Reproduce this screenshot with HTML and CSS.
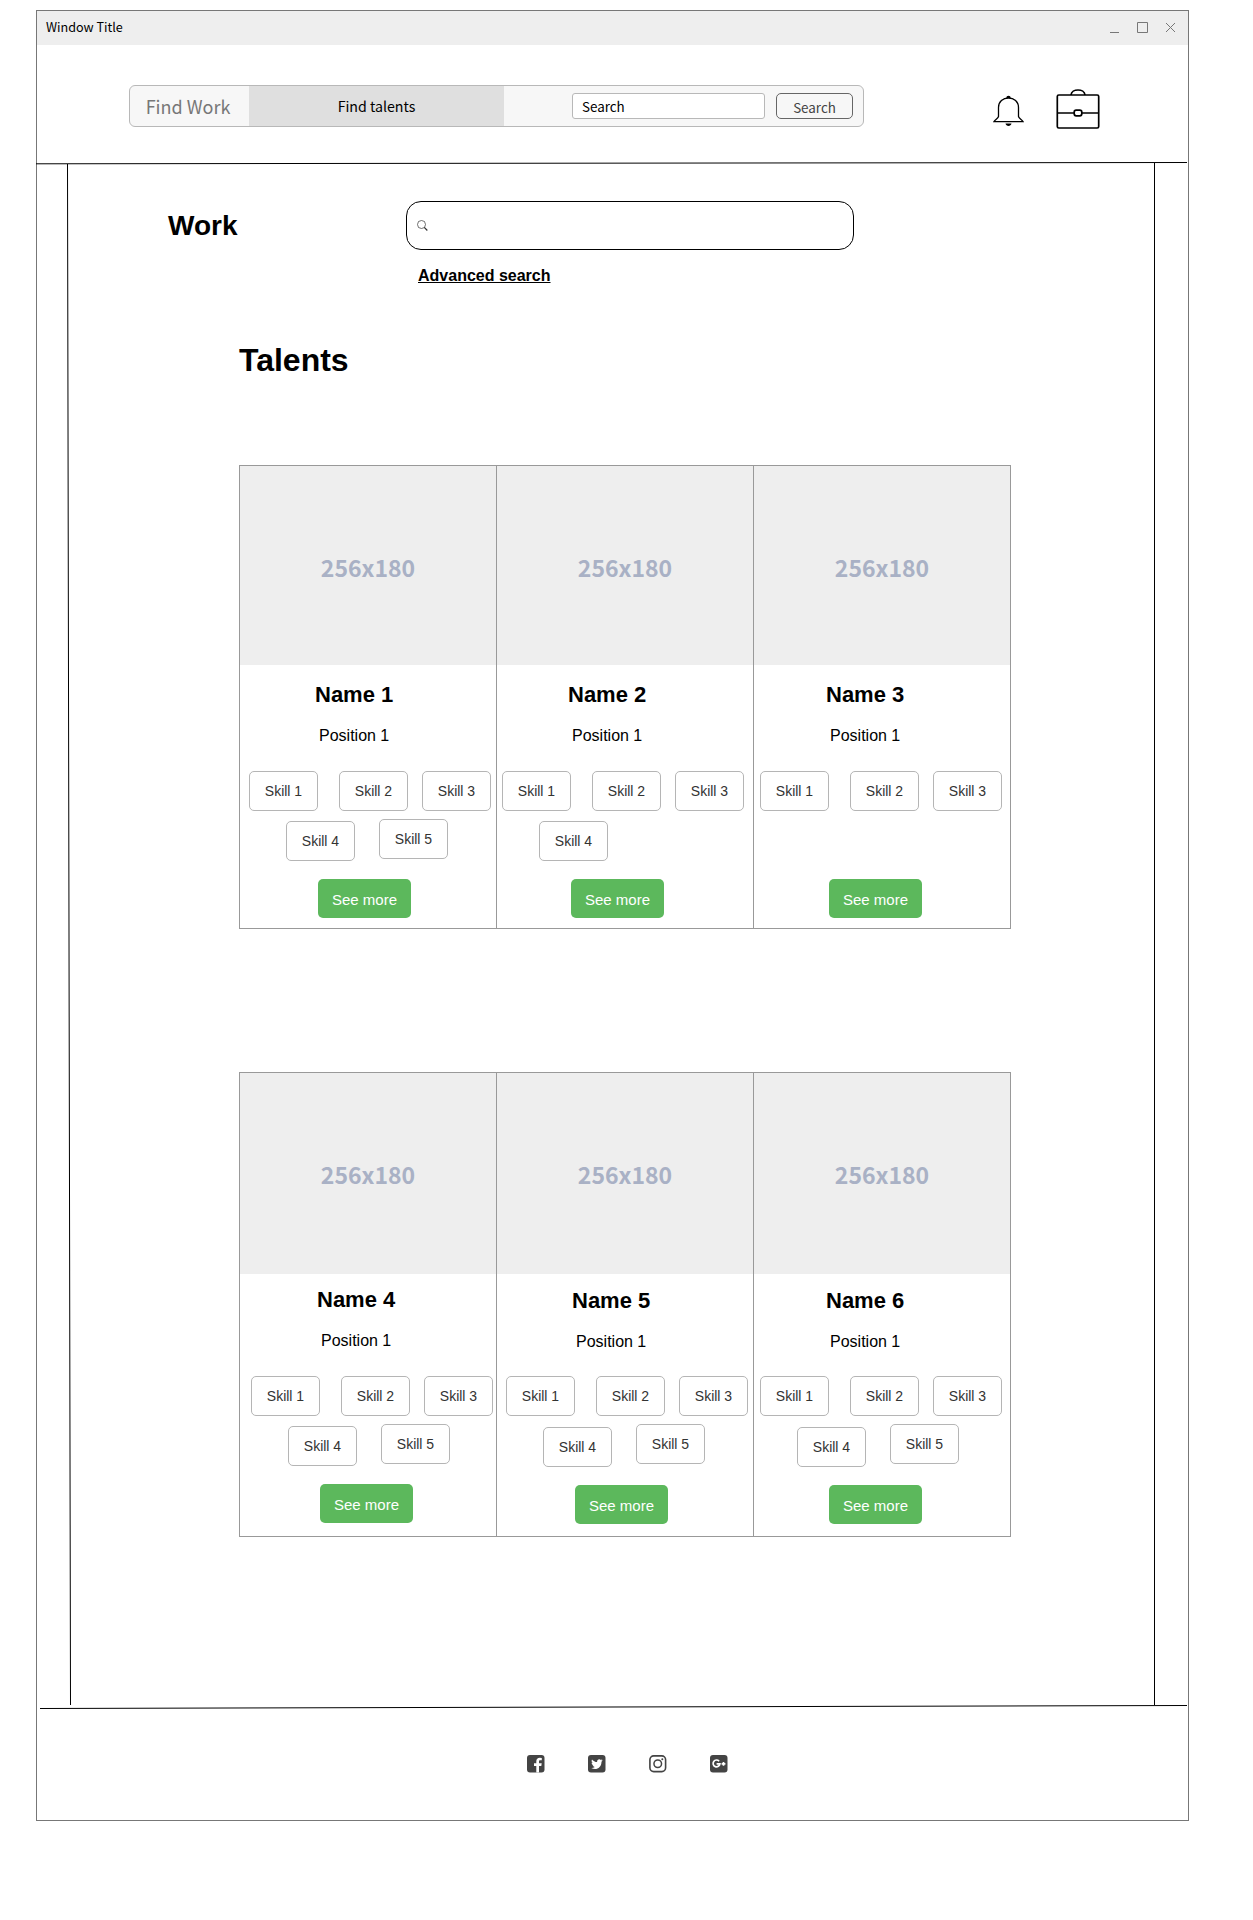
FILE: index.html
```html
<!DOCTYPE html>
<html lang="en">
<head>
<meta charset="utf-8">
<title>Talents</title>
<link rel="stylesheet" href="styles.css">
</head>
<body>
<div class="window">
  <div class="titlebar">
    <span class="titlebar-text">Window Title</span>
    <svg class="titlebar-controls" width="66" height="14" viewBox="0 0 66 14" fill="none" stroke="#777">
      <path d="M0 11.500H9M27.500 1.500H37.500V11.500H27.500Z"/><path d="M56 2L65 11M65 2L56 11"/>
    </svg>
  </div>

  <header class="header">
    <nav class="nav">
      <a class="nav-item nav-work">Find Work</a>
      <a class="nav-item nav-talents">Find talents</a>
      <div class="nav-search">
        <div class="nav-input">Search</div>
        <div class="nav-button">Search</div>
      </div>
    </nav>
    <svg class="bell" width="32" height="36" viewBox="0 0 32 36" fill="none" stroke="#000" stroke-width="1.300">
      <path d="M6.500 22.500V13.500C6.500 7.500 11 4 16.500 4S26.500 7.500 26.500 13.500V22.500C27 24.500 29.500 25 31 27.600H2C3.500 25 6 24.500 6.500 22.500Z"/>
      <path d="M14.300 3.900A2.200 2.200 0 0 1 18.700 3.900ZM13.500 29.500H19.500C19 32.800 14 32.800 13.500 29.500Z" fill="#000" stroke="none"/>
    </svg>
    <svg class="briefcase" width="44" height="40" viewBox="0 0 44 40" fill="none" stroke="#000" stroke-width="1.700">
      <rect x="1.300" y="6" width="41.400" height="33" rx="1.500"/>
      <path d="M15 6C15.500 -.700 28.500 -.700 29 6M1 24H18M26 24H43"/>
      <rect x="18.200" y="21.200" width="7.600" height="5.600" rx="2"/>
    </svg>
  </header>
  <svg class="rule" width="1151" height="3" viewBox="0 0 1151 3"><path d="M-1 1.800L1150 .500" stroke="#000"/></svg>

  <div class="body">
    <svg class="rail" width="40" height="1540" viewBox="0 0 40 1540"><path d="M30.500 -1L33.500 1540" stroke="#000"/></svg>
    <main class="main">
      <div class="top">
        <h1 class="work">Work</h1>
        <div class="search-area">
          <div class="search-box">
            <svg width="12" height="12" viewBox="0 0 12 12" fill="none" stroke="#333"><circle cx="4.500" cy="4.500" r="4" stroke-width=".700"/><path d="M7.300 7.300L10.300 10.500" stroke-width="1.200"/></svg>
          </div>
          <a class="advanced">Advanced search</a>
        </div>
      </div>
      <h2 class="talents">Talents</h2>

      <div class="cards cards-upper">
        <article class="card">
          <div class="photo">256x180</div>
          <div class="info info-1">
            <h3 class="name">Name 1</h3><p class="position">Position 1</p>
            <div class="skills"><span class="skill">Skill 1</span><span class="skill">Skill 2</span><span class="skill">Skill 3</span></div>
            <div class="skills-more"><span class="skill">Skill 4</span><span class="skill">Skill 5</span></div>
            <a class="more">See more</a>
          </div>
        </article>
        <article class="card">
          <div class="photo">256x180</div>
          <div class="info info-2">
            <h3 class="name">Name 2</h3><p class="position">Position 1</p>
            <div class="skills"><span class="skill">Skill 1</span><span class="skill">Skill 2</span><span class="skill">Skill 3</span></div>
            <div class="skills-more"><span class="skill">Skill 4</span></div>
            <a class="more">See more</a>
          </div>
        </article>
        <article class="card">
          <div class="photo">256x180</div>
          <div class="info info-3">
            <h3 class="name">Name 3</h3><p class="position">Position 1</p>
            <div class="skills"><span class="skill">Skill 1</span><span class="skill">Skill 2</span><span class="skill">Skill 3</span></div>
            <div class="skills-more"></div>
            <a class="more">See more</a>
          </div>
        </article>
      </div>

      <div class="cards cards-lower">
        <article class="card">
          <div class="photo">256x180</div>
          <div class="info info-4">
            <h3 class="name">Name 4</h3><p class="position">Position 1</p>
            <div class="skills"><span class="skill">Skill 1</span><span class="skill">Skill 2</span><span class="skill">Skill 3</span></div>
            <div class="skills-more"><span class="skill">Skill 4</span><span class="skill">Skill 5</span></div>
            <a class="more">See more</a>
          </div>
        </article>
        <article class="card">
          <div class="photo">256x180</div>
          <div class="info info-5 info-low">
            <h3 class="name">Name 5</h3><p class="position">Position 1</p>
            <div class="skills"><span class="skill">Skill 1</span><span class="skill">Skill 2</span><span class="skill">Skill 3</span></div>
            <div class="skills-more"><span class="skill">Skill 4</span><span class="skill">Skill 5</span></div>
            <a class="more">See more</a>
          </div>
        </article>
        <article class="card">
          <div class="photo">256x180</div>
          <div class="info info-3 info-low">
            <h3 class="name">Name 6</h3><p class="position">Position 1</p>
            <div class="skills"><span class="skill">Skill 1</span><span class="skill">Skill 2</span><span class="skill">Skill 3</span></div>
            <div class="skills-more"><span class="skill">Skill 4</span><span class="skill">Skill 5</span></div>
            <a class="more">See more</a>
          </div>
        </article>
      </div>
    </main>
    <svg class="rail" width="40" height="1540" viewBox="0 0 40 1540"><path d="M6.500 -2V1540" stroke="#000"/></svg>
  </div>

  <svg class="rule" width="1151" height="4" viewBox="0 0 1151 4"><path d="M3 3.500L1150 .500" stroke="#000"/></svg>
  <footer class="footer">
    <svg class="social" viewBox="0 0 18 18"><rect width="17.500" height="17.500" rx="3" fill="#444"/><path d="M9.300 17.500V10.900H7V8.200H9.300V6.300C9.300 4 10.700 2.800 12.800 2.800L14.800 2.900V5.300H13.400C12.300 5.300 12 5.800 12 6.600V8.200H14.700L14.300 10.900H12V17.500Z" fill="#fff"/></svg>
    <svg class="social" viewBox="0 0 18 18"><rect width="17.500" height="17.500" rx="3" fill="#444"/><path d="M14.700 5.200L13.500 5.500 14.400 4.300 12.900 4.900C11.500 3.400 8.700 4.500 9.100 7.100 7.100 7 5.300 6.100 4 4.500 3.200 5.900 3.700 7.200 4.700 8L3.600 7.700C3.700 9 4.500 9.900 5.600 10.200L4.600 10.300C4.900 11.200 5.700 11.800 6.800 11.900 5.700 12.700 4.500 13 3.200 12.900 8 15.800 13.600 12.800 13.500 6.700Z" fill="#fff"/></svg>
    <svg class="social" viewBox="0 0 18 18" fill="none" stroke="#444"><rect x=".900" y=".900" width="15.700" height="15.700" rx="3.800" stroke-width="1.600"/><circle cx="8.750" cy="8.750" r="3.800" stroke-width="1.500"/><circle cx="13.300" cy="4.200" r="1" fill="#444" stroke="none"/></svg>
    <svg class="social" viewBox="0 0 18 18"><rect width="17.500" height="17.500" rx="3" fill="#444"/><path d="M9.100 6.200A3.400 3.400 0 1 0 9.900 8.800H6.600M13.500 7V10.800M11.600 8.900H15.400" fill="none" stroke="#fff" stroke-width="1.700"/></svg>
  </footer>
</div>
</body>
</html>
```
FILE: styles.css
```css
* { box-sizing: border-box; }

body {
  margin: 0;
  padding: 10px 0 0 36px;
  height: 1920px;
  background: #fff;
  color: #000;
  font-family: "Liberation Sans", Arial, sans-serif;
}

h1, h2, h3, p { margin: 0; }
svg { display: block; flex: none; }

.window {
  width: 1153px;
  height: 1811px;
  border: 1px solid #777;
  display: flex;
  flex-direction: column;
}

.titlebar {
  height: 34px;
  flex: none;
  background: #eee;
  display: flex;
  align-items: center;
  justify-content: space-between;
  padding: 0 12px 0 9px;
  font: 12.6px/20px "Noto Sans CJK SC", sans-serif;
}
.titlebar-text { margin-top: -2px; }

.header {
  height: 117px;
  flex: none;
  display: flex;
  align-items: flex-start;
  padding: 40px 0 0 92px;
  font-family: "Noto Sans CJK SC", sans-serif;
}

.nav {
  width: 735px;
  height: 42px;
  display: flex;
  border: 1px solid #b8b8b8;
  border-radius: 6px;
  background: #f7f7f7;
  overflow: hidden;
}
.nav-item {
  display: flex;
  align-items: center;
  justify-content: center;
}
.nav-work { width: 119px; padding: 0 3px 1px 0; color: #777; font-size: 18px; }
.nav-talents { width: 255px; background: #dfdfdf; font-size: 14.2px; }
.nav-search {
  flex: 1;
  display: flex;
  gap: 11px;
  padding: 7px 0 0 68px;
  font-size: 13.4px;
  line-height: 24px;
}
.nav-input {
  width: 193px;
  height: 26px;
  padding-left: 9px;
  border: 1px solid #b8b8b8;
  border-radius: 3px;
  background: #fff;
}
.nav-button {
  width: 77px;
  height: 26px;
  border: 1px solid #666;
  border-radius: 5px;
  color: #444;
  line-height: 26px;
  text-align: center;
}
.bell { margin: 9px 0 0 128px; }
.briefcase { margin: 4px 0 0 32px; }

.rule, .rail { overflow: visible; }

.body {
  height: 1540px;
  flex: none;
  display: flex;
}
.main { flex: 1; }

.top {
  display: flex;
  align-items: flex-start;
  padding: 36px 0 0 91px;
}
.work {
  width: 238px;
  padding-top: 9px;
  font-size: 28px;
  line-height: 32px;
}
.search-area {
  display: flex;
  flex-direction: column;
  align-items: flex-start;
}
.search-box {
  width: 448px;
  height: 49px;
  border: 1px solid #000;
  border-radius: 15px;
  padding: 18px 0 0 10px;
}
.advanced {
  margin: 16px 0 0 12px;
  font-size: 16px;
  line-height: 20px;
  font-weight: bold;
  text-decoration: underline;
}
.talents {
  margin: 56px 0 0 162px;
  font-size: 32px;
  line-height: 36px;
}

.cards {
  width: 772px;
  height: 464px;
  margin-left: 162px;
  display: grid;
  grid-template-columns: 257px 257px 258px;
  border: 1px solid #999;
  border-width: 1px 0;
}
.cards-upper { margin-top: 87px; }
.cards-lower { height: 465px; margin-top: 143px; }

.card { border-left: 1px solid #999; }
.card:last-child { border-right: 1px solid #999; }

.photo {
  height: 199px;
  display: flex;
  align-items: center;
  justify-content: center;
  padding-top: 2px;
  background: #eee;
  color: #a9b1c5;
  font: bold 23px/36px "Noto Sans CJK SC", sans-serif;
}
.cards-lower .photo { height: 201px; padding-top: 0; }

.info { padding-top: 17px; }
.cards-lower .info { padding-top: 13px; }
.cards-lower .info-low { padding-top: 14px; }
.info-1 { margin-left: 9px; }
.info-2 { margin-left: 5px; }
.info-3 { margin-left: 6px; }
.info-4 { margin-left: 11px; }
.info-5 { margin-left: 9px; }

.name {
  margin-left: 66px;
  font-size: 22px;
  line-height: 26px;
}
.position {
  margin: 18px 0 0 70px;
  font-size: 16px;
  line-height: 20px;
}
.skills {
  display: flex;
  margin-top: 25px;
}
.skill {
  width: 69px;
  height: 40px;
  border: 1px solid #b5b5b5;
  border-radius: 5px;
  color: #333;
  font-size: 14px;
  line-height: 38px;
  text-align: center;
}
.skills .skill:nth-child(2) { margin: 0 14px 0 21px; }
.skills-more {
  display: flex;
  align-items: flex-start;
  gap: 24px;
  height: 42px;
  margin: 8px 0 0 37px;
}
.skills-more .skill:first-child { margin-top: 2px; }
.info-low .skills { margin-top: 24px; }
.info-low .skills-more { height: 43px; }
.info-low .skills-more .skill:first-child { margin-top: 3px; }

.more {
  display: block;
  width: 93px;
  height: 39px;
  margin: 18px 0 0 69px;
  border-radius: 5px;
  background: #5cb85c;
  color: #fff;
  font-size: 15px;
  line-height: 41px;
  text-align: center;
}

.footer {
  display: flex;
  justify-content: center;
  gap: 43.2px;
  padding: 46px 0 0 30px;
}
.social { width: 18px; height: 18px; }
```
